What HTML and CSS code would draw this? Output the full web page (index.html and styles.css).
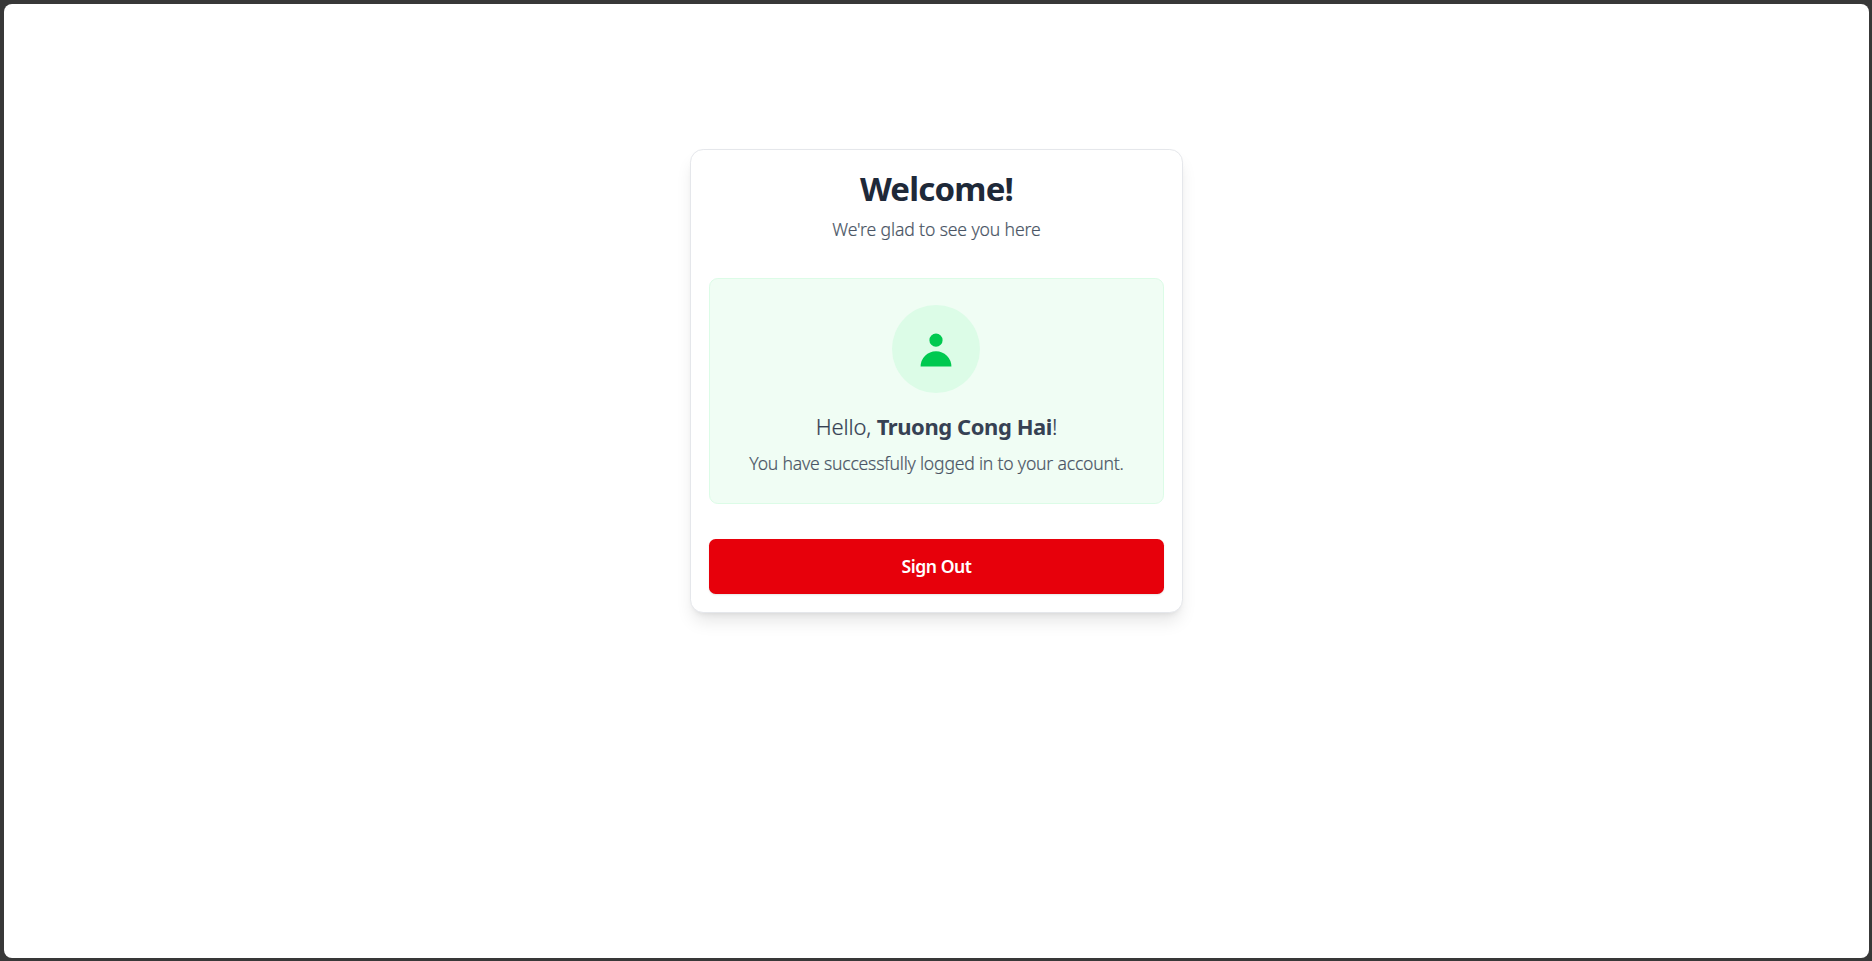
FILE: index.html
```html
<!DOCTYPE html>
<html lang="en">
<head>
<meta charset="utf-8">
<title>Welcome</title>
<link rel="stylesheet" href="styles.css">
</head>
<body>
<main class="page">
  <section class="card">
    <h1 class="title">Welcome!</h1>
    <p class="subtitle">We're glad to see you here</p>
    <div class="panel">
      <div class="avatar">
        <svg class="avatar-icon" viewBox="0 0 20 20" fill="currentColor"><path fill-rule="evenodd" d="M10 9a3 3 0 100-6 3 3 0 000 6zm-7 9a7 7 0 1114 0H3z"/></svg>
      </div>
      <p class="hello">Hello, <strong class="name">Truong Cong Hai</strong>!</p>
      <p class="message">You have successfully logged in to your account.</p>
    </div>
    <button class="signout" type="button">Sign Out</button>
  </section>
</main>
</body>
</html>
```
FILE: styles.css
```css
* { box-sizing: border-box; margin: 0; }
html { font-size: 17.6px; }
body {
  height: 100vh;
  padding: 4px 3px 3px 4px;
  background: #383838;
  font-family: "Noto Sans", "Open Sans", sans-serif;
}
.page {
  height: 100%;
  padding-top: 145px;
  background: #fff;
  border-radius: 8px;
}
.card {
  width: 28rem;
  margin: 0 auto;
  padding: 1rem;
  text-align: center;
  background: #fff;
  border: 1px solid #e5e7eb;
  border-radius: 0.75rem;
  box-shadow: 0 11px 16.5px -3.3px rgba(0, 0, 0, 0.1), 0 4.4px 6.6px -4.4px rgba(0, 0, 0, 0.1);
}
.title {
  padding-top: 1px;
  margin-bottom: calc(0.5rem - 1px);
  font-size: 33px;
  line-height: 2.25rem;
  font-weight: 700;
  letter-spacing: -0.8px;
  color: #1e2939;
}
.subtitle {
  margin-bottom: 2rem;
  line-height: 1.5rem;
  font-size: 1rem;
  font-weight: 300;
  letter-spacing: -0.12px;
  -webkit-text-stroke: 0.2px currentColor;
  color: #4a5565;
}
.panel {
  margin-bottom: 2rem;
  padding: 1.5rem;
  background: #f0fdf4;
  border: 1px solid #dcfce7;
  border-radius: 0.5rem;
}
.avatar {
  display: flex;
  align-items: center;
  justify-content: center;
  width: 5rem;
  height: 5rem;
  margin: 0 auto 1rem;
  color: #00c950;
  background: #dcfce7;
  border-radius: 50%;
}
.avatar-icon { width: 2.5rem; height: 2.5rem; }
.hello {
  margin-bottom: 0.5rem;
  font-size: 1.25rem;
  font-weight: 300;
  line-height: 1.75rem;
  letter-spacing: -0.15px;
  -webkit-text-stroke: 0.2px currentColor;
  color: #364153;
}
.name {
  font-weight: 700;
  letter-spacing: -0.43px;
  -webkit-text-stroke: 0;
}
.message {
  line-height: 1.5rem;
  font-weight: 300;
  letter-spacing: -0.2px;
  -webkit-text-stroke: 0.2px currentColor;
  white-space: nowrap;
  color: #4a5565;
}
.signout {
  display: block;
  width: 100%;
  height: 55px;
  font: 600 1rem/1.5rem "Noto Sans", "Open Sans", sans-serif;
  letter-spacing: -0.45px;
  color: #fff;
  background: #e7000b;
  border: 0;
  border-radius: 0.375rem;
  box-shadow: 0 1px 2px rgba(0, 0, 0, 0.1);
}
```
